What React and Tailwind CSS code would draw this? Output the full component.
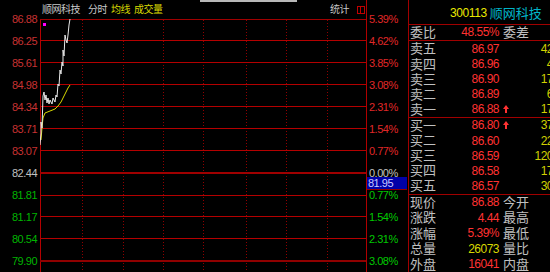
const leftLabels = [
  ['86.88', 'text-[#c83232]'],
  ['86.25', 'text-[#c83232]'],
  ['85.61', 'text-[#c83232]'],
  ['84.98', 'text-[#c83232]'],
  ['84.34', 'text-[#c83232]'],
  ['83.71', 'text-[#c83232]'],
  ['83.07', 'text-[#c83232]'],
  ['82.44', 'text-[#c0c0c0]'],
  ['81.81', 'text-[#00b400]'],
  ['81.17', 'text-[#00b400]'],
  ['80.54', 'text-[#00b400]'],
  ['79.90', 'text-[#00b400]'],
];

const rightLabels = [
  ['5.39%', 'text-[#e02828]'],
  ['4.62%', 'text-[#e02828]'],
  ['3.85%', 'text-[#e02828]'],
  ['3.08%', 'text-[#e02828]'],
  ['2.31%', 'text-[#e02828]'],
  ['1.54%', 'text-[#e02828]'],
  ['0.77%', 'text-[#e02828]'],
  ['0.00%', 'text-[#c0c0c0]'],
  ['0.77%', 'text-[#00c800]'],
  ['1.54%', 'text-[#00c800]'],
  ['2.31%', 'text-[#00c800]'],
  ['3.08%', 'text-[#00c800]'],
];

const hLines = [
  [0.5, 1, '#a00000'],
  [21.5, 1, '#b40000'],
  [43.5, 1, '#b40000'],
  [65.5, 1, '#b40000'],
  [87.5, 1, '#b40000'],
  [109.5, 1, '#b40000'],
  [131.5, 1, '#b40000'],
  [154, 2, '#a00000'],
  [176.5, 1, '#b40000'],
  [197.5, 1, '#b40000'],
  [219.5, 1, '#b40000'],
  [242, 2, '#900000'],
];

const whiteLine =
  '0,126 1,114 1,103 2,109 3,77 4,73 5,81 6,76 7,84 8,79 9,85 10,81 12,85 13,79 15,83 16,76 17,78 18,65 19,67 20,51 21,55 22,43 23,47 23,31 24,37 25,16 26,21 27,24 28,16 29,6 30,0';
const yellowLine =
  '1,121 2,109 3,99 5,94 10,92 15,90 18,87 21,83 23,79 26,73 28,69 30,66';

function Arrow() {
  return (
    <svg width="6" height="8" viewBox="0 0 6 8" className="block">
      <polygon points="3,0 6,4 0,4" fill="#ff3232" />
      <rect x="2" y="4" width="2" height="4" fill="#ff3232" />
    </svg>
  );
}

const sells = [
  ['卖五', '86.97', null, '42'],
  ['卖四', '86.96', null, '4'],
  ['卖三', '86.90', null, '17'],
  ['卖二', '86.89', null, '6'],
  ['卖一', '86.88', 'arrow', '17'],
];
const buys = [
  ['买一', '86.80', 'arrow', '37'],
  ['买二', '86.60', null, '22'],
  ['买三', '86.59', null, '120'],
  ['买四', '86.58', null, '17'],
  ['买五', '86.57', null, '30'],
];
const stats = [
  ['现价', '86.88', 'text-[#ff3232]', '今开'],
  ['涨跌', '4.44', 'text-[#ff3232]', '最高'],
  ['涨幅', '5.39%', 'text-[#ff3232]', '最低'],
  ['总量', '26073', 'text-[#d8d800]', '量比'],
  ['外盘', '16041', 'text-[#ff3232]', '内盘'],
];

function BookRow({ label, price, mark, vol }) {
  return (
    <div className="flex-1 flex items-center">
      <span className="w-[30px] pl-[1px] text-[13px] leading-none text-[#c0c0c0]">{label}</span>
      <span className="w-[60px] text-right text-[12px] tracking-[-0.5px] leading-none text-[#ff3232]">{price}</span>
      <span className="w-[12px] pl-[4px] flex items-center">{mark === 'arrow' ? <Arrow /> : null}</span>
      <span className="flex-1 text-right text-[12px] tracking-[-0.5px] leading-none text-[#d0d000]">{vol}</span>
    </div>
  );
}

export default function App() {
  return (
    <div className="relative w-[550px] h-[272px] bg-black overflow-hidden flex font-['Liberation_Sans','Noto_Sans_CJK_SC',sans-serif]">
      <div className="absolute top-0 left-[200px] w-[97px] h-[2px] bg-[#b8b8b8]" />

      {/* left price axis */}
      <div className="w-[40px] shrink-0 flex flex-col pt-[8px]">
        {leftLabels.map(([t, c], i) => (
          <div key={i} className={`h-[22px] flex items-center justify-end pr-[3px] text-[11px] tracking-[-0.5px] leading-none ${c}`}>
            {t}
          </div>
        ))}
      </div>

      {/* chart column */}
      <div className="w-[327px] shrink-0 flex flex-col border-r border-[#b00000]">
        <div className="h-[19px] flex items-center justify-between pl-[2px] pr-[1px] text-[10px] leading-none tracking-[-0.5px]">
          <div className="flex items-center">
            <span className="text-[#c8c8c8]">顺网科技</span>
            <span className="ml-[8px] text-[#c8c8c8]">分时</span>
            <span className="ml-[4px] text-[#d8d800]">均线</span>
            <span className="ml-[4px] text-[#d8d800]">成交量</span>
          </div>
          <div className="flex items-center">
            <span className="text-[#c8c8c8]">统计</span>
            <span className="ml-[8px] w-[8px] h-[8px] border border-[#c00000] flex">
              <span className="w-[3px] h-full border-r border-[#c00000]" />
            </span>
          </div>
        </div>
        <svg width="326" height="253" className="block">
          <line x1="0.5" y1="0" x2="0.5" y2="253" stroke="#b40000" strokeWidth="1" />
          {[42.5, 83.5, 123.5, 206.5, 246.5, 287.5].map((x, i) => (
            <line key={i} x1={x} y1="1" x2={x} y2="253" stroke="#900000" strokeWidth="1" strokeDasharray="1 2" />
          ))}
          <line x1="163.5" y1="1" x2="163.5" y2="253" stroke="#900000" strokeWidth="1" strokeDasharray="1 2" />
          {hLines.map(([y, w, c], i) => (
            <line key={i} x1="0" y1={y} x2="326" y2={y} stroke={c} strokeWidth={w} />
          ))}
          <polyline points={yellowLine} fill="none" stroke="#d8d800" strokeWidth="1" />
          <polyline points={whiteLine} fill="none" stroke="#e8e8e8" strokeWidth="1" />
          <rect x="3" y="4" width="3" height="3" fill="#ff00ff" />
        </svg>
      </div>

      {/* right percent axis */}
      <div className="relative w-[41px] shrink-0 flex flex-col pt-[8px]">
        {rightLabels.map(([t, c], i) => (
          <div key={i} className={`h-[22px] flex items-center pl-[2px] text-[11px] tracking-[-0.5px] leading-none ${c}`}>
            {t}
          </div>
        ))}
        <div className="absolute top-[177px] left-0 w-[40px] h-[13px] bg-[#0000a8] border-b border-[#900000] flex items-center pl-[1px] text-[11px] tracking-[-0.5px] leading-none text-[#c8c8ff]">
          81.95
        </div>
      </div>

      {/* quote panel */}
      <div className="w-[145px] shrink-0 flex flex-col border-l border-[#a00000]">
        <div className="h-[25px] border-b border-[#a00000] flex items-center pl-[41px] pt-[3px]">
          <span className="text-[12px] tracking-[-0.4px] leading-none text-[#e8e800]">300113</span>
          <span className="ml-[3px] text-[13px] leading-none text-[#00b4c8]">顺网科技</span>
        </div>
        <div className="h-[17px] border-b border-[#a00000] flex items-center">
          <span className="w-[30px] pl-[1px] text-[13px] leading-none text-[#c0c0c0]">委比</span>
          <span className="w-[60px] text-right text-[12px] tracking-[-0.5px] leading-none text-[#ff3232]">48.55%</span>
          <span className="pl-[4px] text-[13px] leading-none text-[#c0c0c0]">委差</span>
        </div>
        <div className="h-[78px] border-b border-[#a00000] flex flex-col">
          {sells.map(([l, p, m, v], i) => (
            <BookRow key={i} label={l} price={p} mark={m} vol={v} />
          ))}
        </div>
        <div className="h-[78px] border-b border-[#a00000] flex flex-col">
          {buys.map(([l, p, m, v], i) => (
            <BookRow key={i} label={l} price={p} mark={m} vol={v} />
          ))}
        </div>
        <div className="flex flex-col">
          {stats.map(([l, v, c, r], i) => (
            <div key={i} className="h-[15.5px] flex items-center">
              <span className="w-[30px] pl-[1px] text-[13px] leading-none text-[#c0c0c0]">{l}</span>
              <span className={`w-[60px] text-right text-[12px] tracking-[-0.5px] leading-none ${c}`}>{v}</span>
              <span className="pl-[4px] text-[13px] leading-none text-[#c0c0c0]">{r}</span>
            </div>
          ))}
        </div>
      </div>
    </div>
  );
}
